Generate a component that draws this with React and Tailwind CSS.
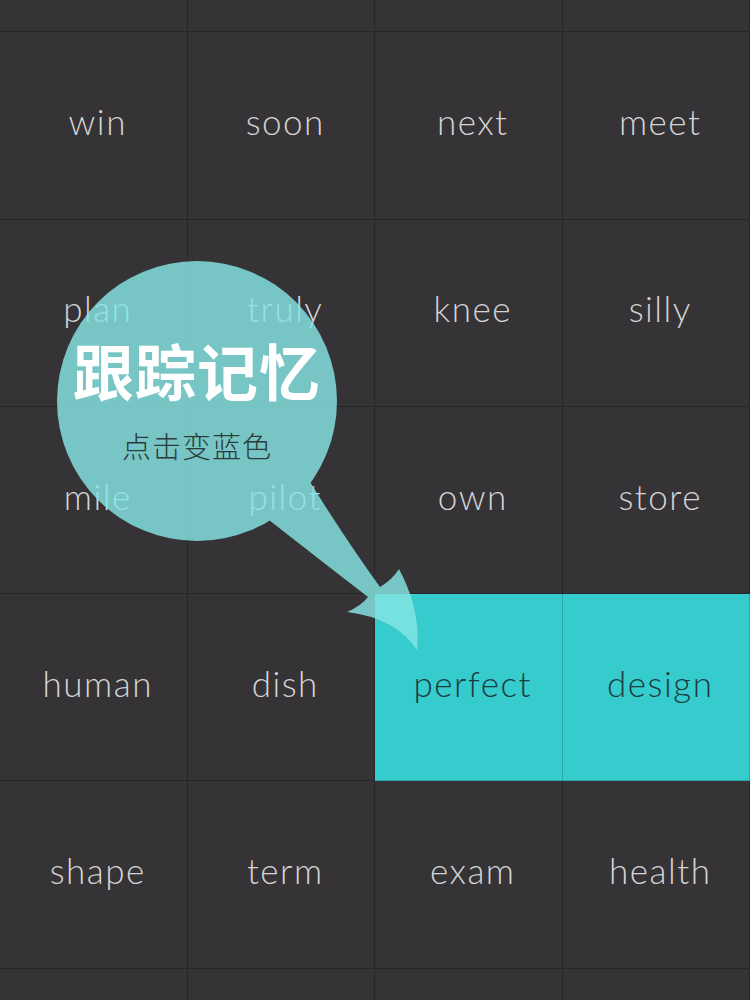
import React from 'react';

const rows = [
  ['', '', '', ''],
  ['win', 'soon', 'next', 'meet'],
  ['plan', 'truly', 'knee', 'silly'],
  ['mile', 'pilot', 'own', 'store'],
  ['human', 'dish', 'perfect', 'design'],
  ['shape', 'term', 'exam', 'health'],
  ['', '', '', ''],
];

const marked = new Set(['perfect', 'design']);

const Cell = ({ word }) => {
  const on = marked.has(word);
  return (
    <div
      className={
        'flex-1 flex items-center justify-center pl-[9px] pb-[8px] border-r border-b ' +
        (on
          ? 'bg-[#36cbcd] border-[#2aa7a9] text-[#1c3c3e]'
          : 'bg-[#353336] border-[#262527] text-[#d4d4d4]')
      }
    >
      <span className="text-[35px] font-light tracking-[1.5px]">{word}</span>
    </div>
  );
};

const Bubble = () => (
  <div className="absolute inset-0 pointer-events-none">
    <svg width="750" height="1000" className="absolute left-0 top-0">
      <g opacity="0.82" fill="#86e6e5">
        <circle cx="197" cy="401" r="140" />
        <path d="M310 482 Q346 540 380 587 Q392 580 399 569 Q421 610 417 650 Q396 618 347 612 Q361 606 368 597 Q320 560 269 520 Z" />
      </g>
    </svg>
    <div className="absolute left-[57px] w-[280px] top-[330px] text-center">
      <div
        className="text-[61px] leading-[80px] font-bold text-white tracking-[1px]"
        style={{ fontFamily: '"Noto Sans CJK SC", sans-serif' }}
      >
        跟踪记忆
      </div>
      <div
        className="mt-[17px] text-[29px] leading-[36px] font-light text-[#2c3c3d] tracking-[1px]"
        style={{ fontFamily: '"Noto Sans CJK SC", sans-serif' }}
      >
        点击变蓝色
      </div>
    </div>
  </div>
);

export default function App() {
  return (
    <div
      className="relative w-[750px] h-[1000px] overflow-hidden bg-[#353336]"
      style={{ fontFamily: 'Lato, "Open Sans", sans-serif' }}
    >
      <div className="mt-[-155px] flex flex-col">
        {rows.map((r, i) => (
          <div key={i} className="flex h-[187.3px]">
            {r.map((w, j) => (
              <Cell key={j} word={w} />
            ))}
          </div>
        ))}
      </div>
      <Bubble />
    </div>
  );
}
